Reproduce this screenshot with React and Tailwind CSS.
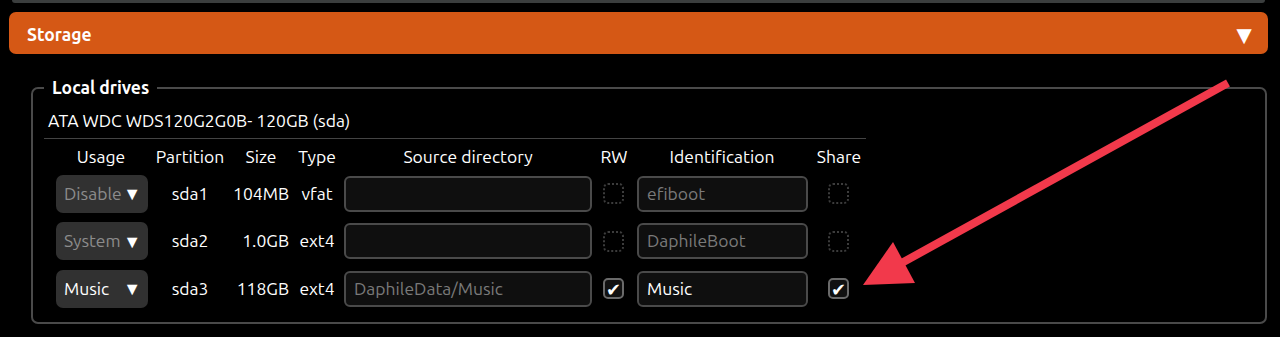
import React from 'react';

const FONT = { fontFamily: '"Ubuntu", "Noto Sans", "Open Sans", sans-serif' };

const partitions = [
  { usage: 'Disable', active: false, part: 'sda1', size: '104MB', type: 'vfat', source: '', rw: false, ident: 'efiboot', identActive: false, share: false },
  { usage: 'System', active: false, part: 'sda2', size: '1.0GB', type: 'ext4', source: '', rw: false, ident: 'DaphileBoot', identActive: false, share: false },
  { usage: 'Music', active: true, part: 'sda3', size: '118GB', type: 'ext4', source: 'DaphileData/Music', rw: true, ident: 'Music', identActive: true, share: true },
];

const cols = 'grid grid-cols-[108px_76px_66px_46px_256px_36px_180px_54px]';

const Check = ({ checked }) =>
  checked ? (
    <div className="w-[21px] h-[21px] rounded-[5px] border-2 border-[#6a6a6a] bg-[#111] flex items-center justify-center text-[18px] leading-none text-white">
      ✔
    </div>
  ) : (
    <div className="w-[21px] h-[21px] rounded-[5px] border-2 border-dotted border-[#3c3c3c]" />
  );

const Select = ({ label, active }) => (
  <div className="w-[92px] h-[38px] rounded-[7px] bg-[#313131] flex items-center justify-between pl-[8px] pr-[7px]">
    <span className={active ? 'text-white' : 'text-[#8c8c8c]'}>{label}</span>
    <span className="text-white text-[18px]">▼</span>
  </div>
);

const Input = ({ value, active, width }) => (
  <div
    className={`${width} h-[36px] rounded-[6px] border-2 border-[#4a4a4a] bg-[#0f0f0f] flex items-center px-[8px] ${active ? 'text-white' : 'text-[#7a7a7a]'}`}
  >
    {value}
  </div>
);

export default function App() {
  return (
    <div className="relative w-[1280px] h-[337px] bg-black text-white text-[17.5px] overflow-hidden" style={FONT}>
      {/* bottom of previous panel */}
      <div className="ml-[12px] mr-[15px] h-[3px] bg-[#3b3e3e] rounded-b-[4px]" />

      <div className="mt-[9px] ml-[9px] mr-[12px] h-[42px] rounded-[7px] bg-[#d55815] flex items-center justify-between pl-[18px] pr-[11px]">
        <span className="font-bold mt-[4px]">Storage</span>
        <span className="text-[26px] leading-none mt-[3px]">▼</span>
      </div>

      <fieldset className="ml-[31px] mr-[13px] mt-[22px] border-2 border-[#4a4a4a] rounded-[7px] pl-[11px] pr-[11px] pb-[9px]">
        <legend className="px-[8px] font-bold leading-[24px]">Local drives</legend>
        <div className="w-[822px]">
          <div className="pt-[9px] pb-[5px] pl-[4px] leading-[24px] border-b border-[#444]">ATA WDC WDS120G2G0B- 120GB (sda)</div>

          <div className={`${cols} h-[31px] pt-[7px] leading-[22px] text-center`}>
            <div className="pl-[6px]">Usage</div>
            <div>Partition</div>
            <div>Size</div>
            <div>Type</div>
            <div>Source directory</div>
            <div>RW</div>
            <div>Identification</div>
            <div>Share</div>
          </div>

          {partitions.map((p) => (
            <div key={p.part} className={`${cols} h-[47.5px] items-center`}>
              <div className="flex justify-start pl-[12px]">
                <Select label={p.usage} active={p.active} />
              </div>
              <div className="text-center">{p.part}</div>
              <div className="text-right pr-[5px]">{p.size}</div>
              <div className="text-center">{p.type}</div>
              <div className="flex justify-start pl-[4px]">
                <Input value={p.source} active={false} width="w-[248px]" />
              </div>
              <div className="flex justify-start pl-[7px]">
                <Check checked={p.rw} />
              </div>
              <div className="flex justify-start pl-[5px]">
                <Input value={p.ident} active={p.identActive} width="w-[171px]" />
              </div>
              <div className="flex justify-start pl-[16px]">
                <Check checked={p.share} />
              </div>
            </div>
          ))}
        </div>
      </fieldset>

      {/* annotation arrow */}
      <svg className="absolute left-0 top-0 pointer-events-none" width="1280" height="337">
        <line x1="1228" y1="83" x2="898" y2="265" stroke="#f2394b" strokeWidth="8" />
        <polygon points="863,285 893,242 915,283" fill="#f2394b" />
      </svg>
    </div>
  );
}
